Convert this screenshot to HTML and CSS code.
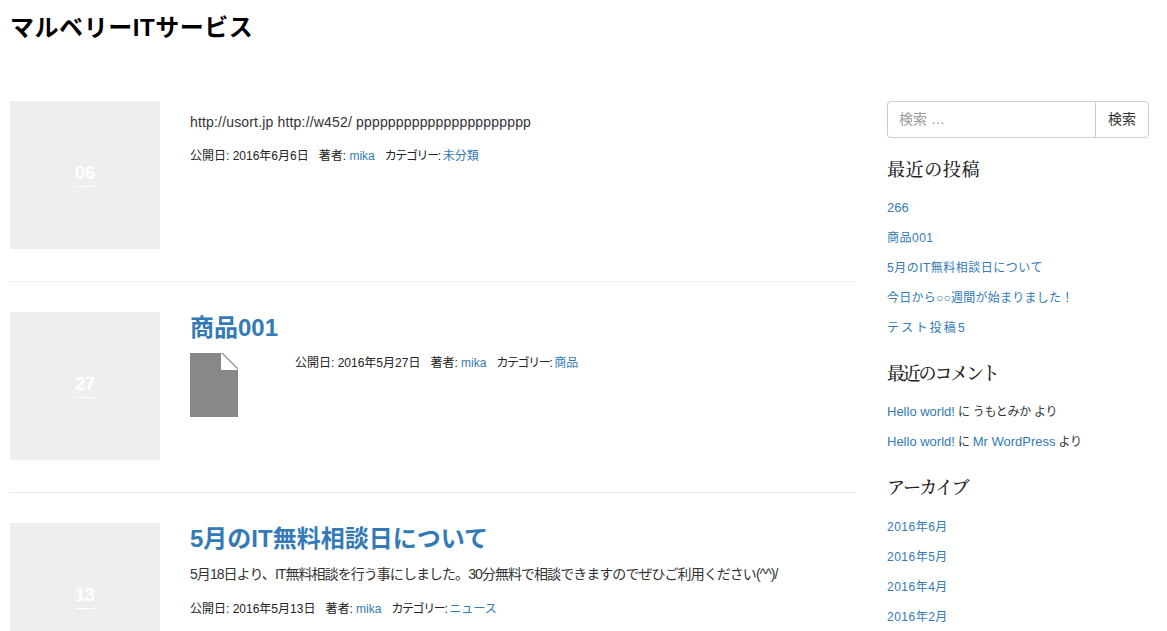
FILE: index.html
```html
<!DOCTYPE html>
<html lang="ja">
<head>
<meta charset="utf-8">
<title>マルベリーITサービス</title>
<link rel="stylesheet" href="styles.css">
</head>
<body>
<header class="site-header"><h1 class="site-title">マルベリーITサービス</h1></header>
<div class="layout">
  <main class="main">
    <article class="post">
      <div class="date-box"><span class="day">06</span></div>
      <div class="post-body">
        <p class="excerpt first">http://usort.jp http://w452/ pppppppppppppppppppppp</p>
        <p class="meta">公開日: 2016年6月6日<span class="sep">著者: <a href="#">mika</a></span><span class="sep"><span class="cat-label">カテゴリー:</span> <a href="#">未分類</a></span></p>
      </div>
    </article>
    <article class="post">
      <div class="date-box"><span class="day">27</span></div>
      <div class="post-body">
        <h2 class="post-title"><a href="#">商品001</a></h2>
        <div class="attachment">
          <svg class="file-icon" width="48" height="64" viewBox="0 0 48 64" aria-hidden="true"><path d="M0 0H31V17H48V64H0Z" fill="#888"/><path d="M33 0L48 15V17H31V0Z" fill="#fff"/><path d="M31 0H33L48 15V17L31 0Z" fill="#999"/></svg>
          <p class="meta attach-meta">公開日: 2016年5月27日<span class="sep">著者: <a href="#">mika</a></span><span class="sep"><span class="cat-label">カテゴリー:</span> <a href="#">商品</a></span></p>
        </div>
      </div>
    </article>
    <article class="post">
      <div class="date-box"><span class="day">13</span></div>
      <div class="post-body">
        <h2 class="post-title"><a href="#">5月のIT無料相談日について</a></h2>
        <p class="excerpt jp">5月18日より、IT無料相談を行う事にしました。30分無料で相談できますのでぜひご利用ください(^^)/</p>
        <p class="meta">公開日: 2016年5月13日<span class="sep">著者: <a href="#">mika</a></span><span class="sep"><span class="cat-label">カテゴリー:</span> <a href="#">ニュース</a></span></p>
      </div>
    </article>
  </main>
  <aside class="sidebar">
    <form class="search">
      <input class="search-input" type="text" placeholder="検索 …">
      <button class="search-btn" type="button">検索</button>
    </form>
    <section class="widget">
      <h3 class="widget-title posts">最近の投稿</h3>
      <ul class="widget-list">
        <li><a class="latin" href="#">266</a></li>
        <li><a href="#">商品001</a></li>
        <li><a href="#">5月のIT無料相談日について</a></li>
        <li><a class="tight" href="#">今日から○○週間が始まりました！</a></li>
        <li><a class="wide" href="#">テスト投稿5</a></li>
      </ul>
    </section>
    <section class="widget">
      <h3 class="widget-title comments">最近のコメント</h3>
      <ul class="widget-list">
        <li class="comment"><a class="latin" href="#">Hello world!</a> に うもとみか より</li>
        <li class="comment"><a class="latin" href="#">Hello world!</a> に <a class="latin" href="#">Mr WordPress</a> より</li>
      </ul>
    </section>
    <section class="widget">
      <h3 class="widget-title archive">アーカイブ</h3>
      <ul class="widget-list">
        <li><a href="#">2016年6月</a></li>
        <li><a href="#">2016年5月</a></li>
        <li><a href="#">2016年4月</a></li>
        <li><a href="#">2016年2月</a></li>
      </ul>
    </section>
  </aside>
</div>
</body>
</html>
```
FILE: styles.css
```css
* { box-sizing: border-box; }
html, body { margin: 0; height: 631px; overflow: hidden; background: #fff; }
body {
  font-family: "Liberation Sans", "Noto Sans CJK JP", sans-serif;
  font-size: 12px;
  line-height: 20px;
  color: #333;
}
a { color: #337ab7; text-decoration: none; }
.site-header { padding: 10px 10px 0; height: 101px; }
.site-title { margin: 0; font-size: 24px; line-height: 36px; font-weight: 700; color: #000; letter-spacing: .55px; }
.layout { display: flex; padding-left: 10px; }
.main { width: 846px; flex: none; }
.post { display: flex; height: 211px; padding-bottom: 31px; border-bottom: 1px solid #eee; }
.post + .post { padding-top: 30px; }
.post:first-child { height: 181px; padding-bottom: 0; }
.date-box {
  width: 150px; height: 148px; flex: none; background: #eee;
  display: flex; align-items: center; justify-content: center;
}
.day {
  color: #fff; font-size: 18px; line-height: 22px; font-weight: 700;
  border-bottom: 1px solid #fff; padding-bottom: 2px; width: 20px;
  display: block; text-align: center; margin-top: -2px;
}
.post-body { padding-left: 30px; flex: 1; min-width: 0; }
.post-title { margin: -1px 0 9px; font-size: 24px; line-height: 33px; font-weight: 700; }
.excerpt { margin: 0 0 15px; font-size: 14px; line-height: 20px; }
.excerpt.first { margin: 11px 0 14px; letter-spacing: .17px; }
.excerpt.jp { letter-spacing: -.95px; }
.meta { margin: 0; font-size: 12px; line-height: 20px; color: #222; }
.sep { margin-left: 10px; }
.cat-label { letter-spacing: -1.4px; margin-right: -.4px; }
.attachment { display: flex; align-items: flex-start; }
.file-icon { display: block; flex: none; }
.attach-meta { margin-left: 57px; }
.sidebar { width: 262px; flex: none; margin-left: 31px; }
.search { display: flex; height: 37px; margin: 0 0 15px; }
.search-input {
  width: 208px; height: 37px; padding: 5px 11px 7px; font: inherit; font-size: 14px;
  border: 1px solid #ccc; border-right: 0; border-radius: 4px 0 0 4px; color: #555;
}
.search-input::placeholder { color: #999; opacity: 1; }
.search-btn {
  width: 54px; height: 37px; padding: 0 0 2px; font: inherit; font-size: 14px; color: #333;
  background: #fff; border: 1px solid #ccc; border-radius: 0 4px 4px 0;
}
.widget { margin-bottom: 9px; }
.widget-title {
  margin: 0 0 11px; font-size: 18px; line-height: 34px; font-weight: 500; color: #222;
  font-family: "Liberation Serif", "Noto Serif CJK JP", "Noto Sans CJK JP", serif;
}
.widget-title.posts { letter-spacing: .6px; }
.widget-title.comments { letter-spacing: -2.2px; }
.widget-title.archive { letter-spacing: -1.4px; margin-bottom: 12px; }
.widget-list { list-style: none; margin: 0; padding: 0; }
.widget-list li { height: 30px; line-height: 20px; letter-spacing: .5px; }
.widget-list li.comment { letter-spacing: -.3px; }
.widget-list .latin { font-size: 13px; letter-spacing: 0; }
.widget-list .tight { letter-spacing: .25px; }
.widget-list .wide { letter-spacing: 2.2px; }
```
